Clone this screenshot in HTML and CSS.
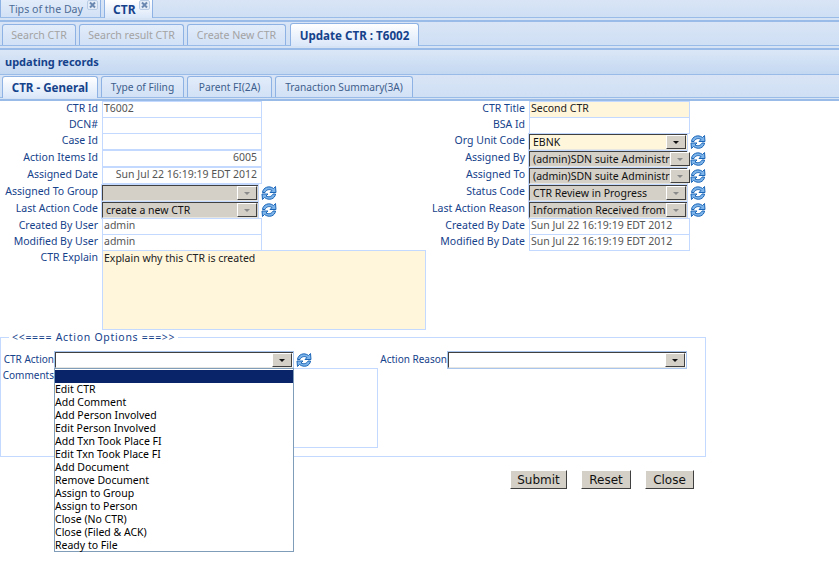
FILE: index.html
```html
<!DOCTYPE html>
<html lang="en">
	<head>
		<meta charset="utf-8">
		<title>CTR</title>
		<link rel="stylesheet" href="styles.css">
	</head>
	<body>
		<svg width="0" height="0" class="defs">
			<symbol id="refresh" viewBox="0 0 16 16">
				<path d="M1.500 7.500 C2 2.500 8 0 12.500 3.500 L14.500 1.500 L15 7.500 L9 7.500 L11 5.500 C8 3.500 5 5 4 7.500 Z" fill="#7db4ea" stroke="#1c66b8" stroke-width="1"/>
				<path d="M14.500 9 C14 14 8 16 3.500 12.500 L1.500 14.500 L1 9 L7 9 L5 11 C8 12.500 11 11.500 12 9 Z" fill="#7db4ea" stroke="#1c66b8" stroke-width="1"/>
			</symbol>
			<symbol id="cross" viewBox="0 0 9 8">
				<path d="M2 1.500 L7 6.500 M7 1.500 L2 6.500" fill="none" stroke="#6b88b0" stroke-width="2"/>
			</symbol>
		</svg>

		<div class="tabstrip top">
			<div class="tabrow">
				<div class="tab off">Tips of the Day <span class="close"><svg><use href="#cross"/></svg></span></div>
				<div class="tab on">CTR <span class="close"><svg><use href="#cross"/></svg></span></div>
			</div>
		</div>
		<div class="tabstrip sub">
			<div class="tabrow">
				<div class="tab off dim">Search CTR</div>
				<div class="tab off dim">Search result CTR</div>
				<div class="tab off dim">Create New CTR</div>
				<div class="tab on">Update CTR : T6002</div>
			</div>
		</div>
		<div class="panel-head">updating records</div>
		<div class="tabstrip form-tabs">
			<div class="tabrow">
				<div class="tab on">CTR - General</div>
				<div class="tab off">Type of Filing</div>
				<div class="tab off">Parent FI(2A)</div>
				<div class="tab off">Tranaction Summary(3A)</div>
			</div>
		</div>

		<div class="form">
			<label>CTR Id</label>
			<div class="field">T6002</div>
			<label>CTR Title</label>
			<div class="field wide req">Second CTR</div>

			<label>DCN#</label>
			<div class="field"></div>
			<label>BSA Id</label>
			<div class="field wide"></div>

			<label>Case Id</label>
			<div class="field"></div>
			<label>Org Unit Code</label>
			<div class="line">
				<div class="combo req wide"><span class="val">EBNK</span><span class="arrow"></span></div>
				<svg class="reload"><use href="#refresh"/></svg>
			</div>

			<label>Action Items Id</label>
			<div class="field num">6005</div>
			<label>Assigned By</label>
			<div class="line">
				<div class="combo off wide"><span class="val">(admin)SDN suite Administr</span><span class="arrow"></span></div>
				<svg class="reload"><use href="#refresh"/></svg>
			</div>

			<label>Assigned Date</label>
			<div class="field num">Sun Jul 22 16:19:19 EDT 2012</div>
			<label>Assigned To</label>
			<div class="line">
				<div class="combo off wide"><span class="val">(admin)SDN suite Administr</span><span class="arrow"></span></div>
				<svg class="reload"><use href="#refresh"/></svg>
			</div>

			<label>Assigned To Group</label>
			<div class="line">
				<div class="combo off"><span class="val"></span><span class="arrow"></span></div>
				<svg class="reload"><use href="#refresh"/></svg>
			</div>
			<label>Status Code</label>
			<div class="line">
				<div class="combo off wide"><span class="val">CTR Review in Progress</span><span class="arrow"></span></div>
				<svg class="reload"><use href="#refresh"/></svg>
			</div>

			<label>Last Action Code</label>
			<div class="line">
				<div class="combo off"><span class="val">create a new CTR</span><span class="arrow"></span></div>
				<svg class="reload"><use href="#refresh"/></svg>
			</div>
			<label>Last Action Reason</label>
			<div class="line">
				<div class="combo off wide"><span class="val">Information Received from</span><span class="arrow"></span></div>
				<svg class="reload"><use href="#refresh"/></svg>
			</div>

			<label>Created By User</label>
			<div class="field">admin</div>
			<label>Created By Date</label>
			<div class="field wide">Sun Jul 22 16:19:19 EDT 2012</div>

			<label>Modified By User</label>
			<div class="field">admin</div>
			<label>Modified By Date</label>
			<div class="field wide">Sun Jul 22 16:19:19 EDT 2012</div>

			<label>CTR Explain</label>
			<div class="explain">Explain why this CTR is created</div>
		</div>

		<fieldset class="actions">
			<legend>&lt;&lt;==== Action Options ===&gt;&gt;</legend>
			<div class="action-row">
				<label class="short">CTR Action</label>
				<div class="combo open"><span class="val"></span><span class="arrow"></span></div>
				<svg class="reload"><use href="#refresh"/></svg>
				<label class="reason">Action Reason</label>
				<div class="combo open reason-box"><span class="val"></span><span class="arrow"></span></div>
			</div>
			<div class="comment-row">
				<label class="short">Comments</label>
				<div class="comments"></div>
			</div>
		</fieldset>

		<ul class="dropdown">
			<li class="sel"></li>
			<li>Edit CTR</li>
			<li>Add Comment</li>
			<li>Add Person Involved</li>
			<li>Edit Person Involved</li>
			<li>Add Txn Took Place FI</li>
			<li>Edit Txn Took Place FI</li>
			<li>Add Document</li>
			<li>Remove Document</li>
			<li>Assign to Group</li>
			<li>Assign to Person</li>
			<li>Close (No CTR)</li>
			<li>Close (Filed &amp; ACK)</li>
			<li>Ready to File</li>
		</ul>

		<div class="buttons">
			<button class="b-submit">Submit</button>
			<button class="b-reset">Reset</button>
			<button class="b-close">Close</button>
		</div>
	</body>
</html>
```
FILE: styles.css
```css
* {
	box-sizing: border-box;
}
body {
	margin: 0;
	background-color: #ffffff;
	font-family: 'Noto Sans', sans-serif;
	font-size: 10.5px;
	color: #15428b;
	position: relative;
	height: 582px;
	overflow: hidden;
}
.defs {
	position: absolute;
}

/* tab strips */
.tabstrip {
	background: #d6e3f5;
	border-bottom: 2px solid #99bbe8;
	padding-bottom: 2px;
}
.tabrow {
	display: flex;
	align-items: flex-end;
	gap: 3px;
	height: 100%;
	padding-left: 2px;
	background: linear-gradient(#d9e5f6, #cfdff4);
	border-bottom: 1px solid #99bbe8;
}
.tabstrip.top {
	height: 22px;
}
.tabstrip.sub {
	height: 28px;
}
.tabstrip.form-tabs {
	height: 26px;
	padding-bottom: 1px;
}
.top .tabrow {
	padding-left: 0;
}
.tab {
	height: 21px;
	display: flex;
	align-items: center;
	justify-content: center;
	border: 1px solid #8db2e3;
	border-bottom: none;
	border-radius: 3px 3px 0 0;
	background: linear-gradient(#e2ecfa, #d2e1f6);
	color: #3d5e8c;
	font-size: 10.6px;
	white-space: nowrap;
}
.tab.on {
	background: linear-gradient(#ffffff, #dae7f9);
	color: #15428b;
	font-size: 11.6px;
	font-weight: bold;
	height: 23px;
	margin-bottom: -1px;
}
.tab.dim {
	color: #a3a3a3;
}
.top .tab {
	height: 17px;
	border-top: none;
	border-radius: 0;
	justify-content: flex-start;
	padding-left: 8px;
	position: relative;
	color: #4d6c96;
}
.top .tab.on {
	height: 18px;
	color: #15428b;
	padding-left: 8px;
}
.top .off {
	width: 101px;
}
.top .on {
	width: 49px;
	font-size: 12px;
}
.sub .tab:nth-child(1) { width: 74px; }
.sub .tab:nth-child(2) { width: 105px; }
.sub .tab:nth-child(3) { width: 99px; }
.sub .tab:nth-child(4) { width: 129px; margin-left: 1px; }
.form-tabs .tab { font-size: 10.2px; }
.form-tabs .tab:nth-child(1) { width: 96px; height: 22px; font-size: 11.6px; }
.form-tabs .tab:nth-child(2) { width: 83px; }
.form-tabs .tab:nth-child(3) { width: 85px; }
.form-tabs .tab:nth-child(4) { width: 138px; }
.close {
	position: absolute;
	right: 2px;
	top: 0;
	width: 11px;
	height: 10px;
	border: 1px solid #b9cce6;
	border-radius: 2px;
	background-color: #e4ecf7;
}
.close svg {
	display: block;
	width: 9px;
	height: 8px;
}
.panel-head {
	height: 25px;
	padding: 4px 5px 0;
	background: linear-gradient(#dbe7f7, #c4d8f1);
	border-bottom: 1px solid #99bbe8;
	font-size: 11px;
	font-weight: bold;
	color: #15428b;
}

/* form grid */
.form {
	display: grid;
	grid-template-columns: 98px 319px 100px 1fr;
	grid-template-rows: 16px 16px 17px 17px 17px 17px 17px 16px 16px;
	grid-auto-rows: 16px;
	column-gap: 4px;
	align-items: start;
}
label {
	text-align: right;
	white-space: nowrap;
	color: #15428b;
	line-height: 14px;
}
.field {
	width: 160px;
	height: 17px;
	padding: 0 1px;
	border: 1px solid #c3d9ff;
	color: #555555;
	white-space: nowrap;
	line-height: 13px;
}
.field.wide {
	width: 161px;
}
.req {
	background-color: #fff6dc;
	color: #222222;
}
.field.num {
	text-align: right;
	padding-right: 4px;
}
.line {
	display: flex;
	align-items: center;
	gap: 3px;
	height: 17px;
}
.combo {
	display: flex;
	justify-content: space-between;
	width: 156px;
	height: 16px;
	padding-right: 1px;
	border-top: 1px solid #404040;
	border-left: 1px solid #404040;
	border-bottom: 1px solid #e8e6e0;
	outline: 1px solid #c3d9ff;
	color: #111111;
	white-space: nowrap;
}
.combo.wide {
	width: 158px;
}
.combo.off {
	background-color: #d4d0c8;
}
.combo.req {
	background-color: #fff6dc;
}
.combo.open {
	background-color: #ffffff;
	width: 238px;
	outline-color: #a9c5ee;
}
.combo .val {
	padding-left: 3px;
	line-height: 14px;
}
.arrow {
	flex: none;
	position: relative;
	width: 20px;
	height: 14px;
	background-color: #d4d0c8;
	border-top: 1px solid #ffffff;
	border-left: 1px solid #ffffff;
	border-right: 1px solid #404040;
	border-bottom: 1px solid #404040;
}
.arrow::after {
	content: '';
	position: absolute;
	left: 6px;
	top: 5px;
	border-left: 3px solid transparent;
	border-right: 3px solid transparent;
	border-top: 3px solid #111111;
}
.off .arrow::after {
	border-top-color: #8a8a8a;
}
.reload {
	flex: none;
	width: 16px;
	height: 16px;
}
.explain {
	grid-column: 2 / 5;
	grid-row: span 5;
	width: 324px;
	height: 80px;
	padding: 0 1px;
	background-color: #fff6dc;
	border: 1px solid #c3d9ff;
	color: #222222;
	line-height: 14px;
}

/* action options */
.actions {
	position: absolute;
	left: 0;
	top: 330px;
	width: 706px;
	height: 127px;
	margin: 0;
	padding: 8px 0 0;
	border: 1px solid #c3d9ff;
}
.actions legend {
	margin-left: 8px;
	padding: 0 3px;
	color: #15428b;
	letter-spacing: 0.7px;
	line-height: 14px;
}
.action-row {
	display: flex;
	align-items: center;
	height: 16px;
}
.action-row label {
	margin-top: -2px;
}
.short {
	width: 53px;
	flex: none;
	margin-right: 1px;
	font-size: 10px;
}
.action-row .reload {
	margin-left: 3px;
}
.reason {
	width: 69px;
	flex: none;
	margin-left: 66px;
	margin-right: 1px;
	font-size: 10px;
}
.comment-row {
	display: flex;
}
.comments {
	width: 323px;
	height: 80px;
	border: 1px solid #c3d9ff;
}
.dropdown {
	position: absolute;
	left: 54px;
	top: 368px;
	width: 240px;
	height: 184px;
	margin: 0;
	padding: 1px 0 0;
	list-style: none;
	background-color: #ffffff;
	border: 1px solid #7f9db9;
	color: #000000;
}
.dropdown li {
	height: 13px;
	line-height: 13px;
	white-space: nowrap;
}
.dropdown .sel {
	background-color: #0a246a;
}

.buttons {
	position: absolute;
	left: 510px;
	top: 470px;
	display: flex;
	gap: 14px;
}
button {
	height: 19px;
	padding: 0;
	background-color: #d4d0c8;
	border: 1px solid;
	border-color: #ffffff #404040 #404040 #ffffff;
	font-family: 'DejaVu Sans', sans-serif;
	font-size: 12px;
	color: #111111;
}
.b-submit { width: 57px; }
.b-reset { width: 50px; }
.b-close { width: 49px; }
```
